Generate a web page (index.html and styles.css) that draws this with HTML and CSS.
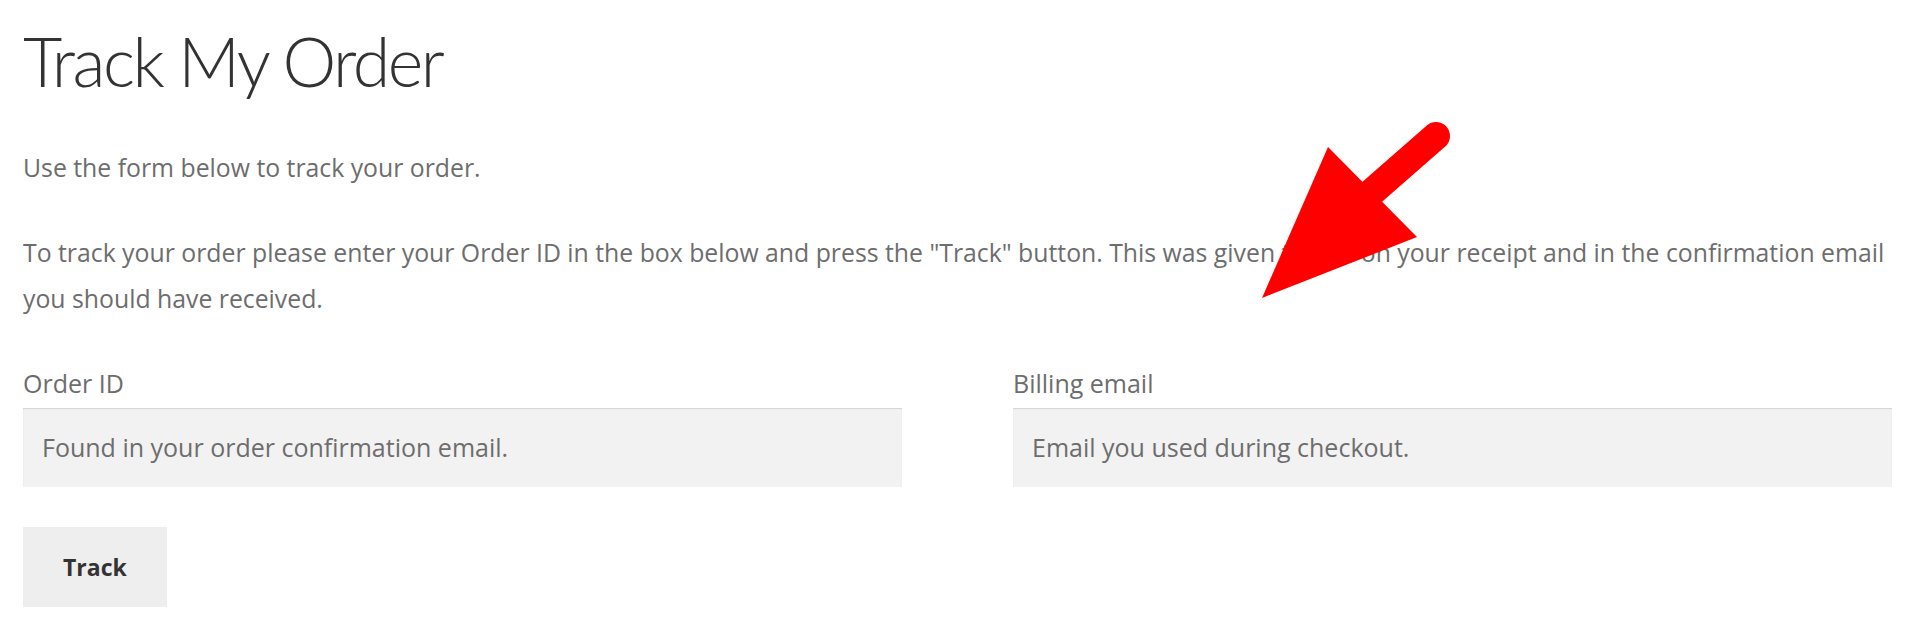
FILE: index.html
```html
<!DOCTYPE html>
<html>
<head>
  <title>Track My Order</title>
  <link rel="stylesheet" href="styles.css">
</head>
<body>
  <div class="container">
    <h1>Track My Order</h1>
    <p>Use the form below to track your order.</p>
    <p>To track your order please enter your Order ID in the box below and press the "Track" button. This was given to you on your receipt and in the confirmation email you should have received.</p>

    <form action="/order-tracking" method="post" class="track-order">
      <div class="form-row">
        <div class="form-group">
          <label for="orderid">Order ID</label>
          <input type="text" id="orderid" name="orderid" placeholder="Found in your order confirmation email.">
        </div>
        <div class="form-group">
          <label for="order_email">Billing email</label>
          <input type="text" id="order_email" name="order_email" placeholder="Email you used during checkout.">
        </div>
      </div>
      <div class="form-actions">
        <button type="submit" name="track">Track</button>
      </div>
    </form>
  </div>

  <!-- annotation arrow -->
  <svg class="arrow" width="1920" height="627" viewBox="0 0 1920 627">
    <line x1="1372" y1="192" x2="1436" y2="136" stroke="#ff0000" stroke-width="28" stroke-linecap="round"/>
    <polygon points="1262,298 1328,147 1417,237" fill="#ff0000"/>
  </svg>
</body>
</html>
```

FILE: styles.css
```css
body {
  font-family: "Open Sans", "Liberation Sans", sans-serif;
  background-color: #ffffff;
  color: #6d6d6d;
  margin: 0;
  padding: 0;
}

.container {
  padding: 20px 28px 0 23px;
}

h1 {
  font-family: Lato, "Open Sans", sans-serif;
  font-weight: 300;
  font-size: 68px;
  line-height: 1.2;
  letter-spacing: -2.5px;
  color: #333333;
  margin: 0 0 42px 0;
}

p {
  font-size: 24.8px;
  line-height: 46px;
  margin: 0 0 39px 0;
}

.form-row {
  display: grid;
  grid-template-columns: 1fr 1fr;
  column-gap: 111px;
}

.form-group label {
  display: block;
  font-size: 25px;
  line-height: 46px;
  margin-bottom: 2px;
}

.form-group input {
  display: block;
  width: 100%;
  height: 79px;
  box-sizing: border-box;
  padding: 0 19px;
  border: none;
  background-color: #f2f2f2;
  box-shadow: inset 0 1px 1px rgba(0, 0, 0, 0.125);
  font-family: "Open Sans", "Liberation Sans", sans-serif;
  font-size: 25px;
  color: #43454b;
  outline: none;
}

.form-group input::placeholder {
  color: #6d6d6d;
  opacity: 1;
}

.form-actions {
  margin-top: 40px;
}

.form-actions button {
  height: 80px;
  padding: 0 40px;
  border: none;
  background-color: #eeeeee;
  color: #333333;
  font-family: "Open Sans", "Liberation Sans", sans-serif;
  font-size: 23px;
  font-weight: 700;
  cursor: pointer;
}

.arrow {
  position: absolute;
  top: 0;
  left: 0;
  pointer-events: none;
}
```
